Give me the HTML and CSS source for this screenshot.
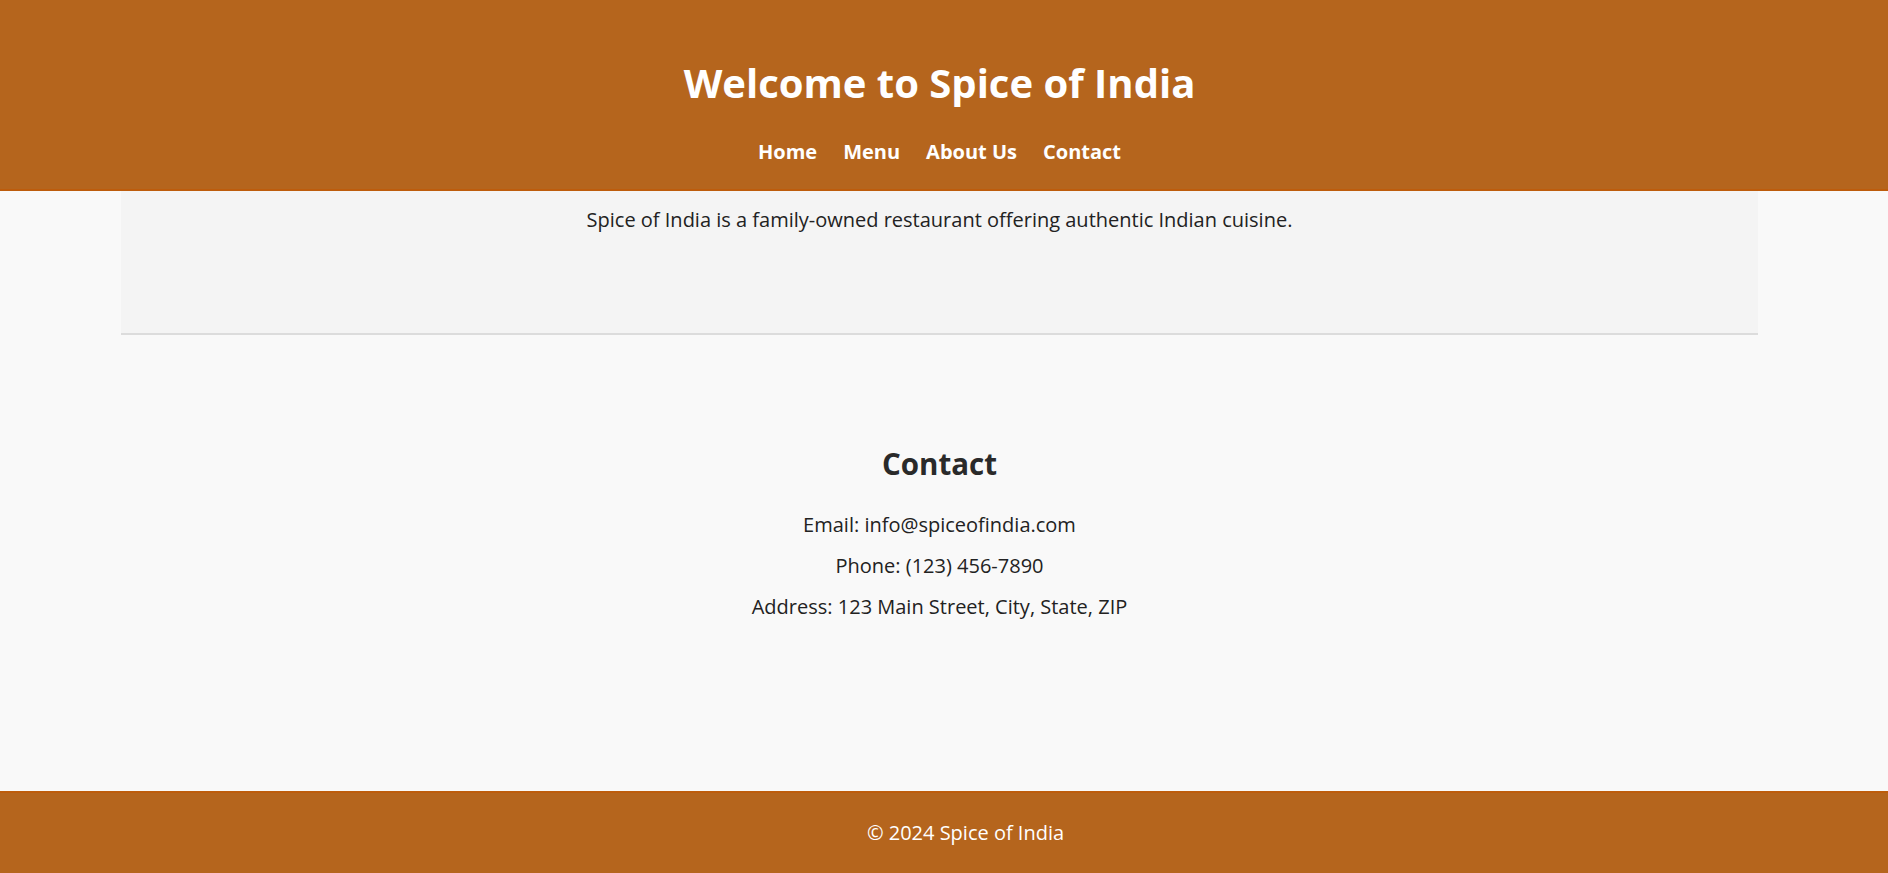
FILE: index.html
```html
<!DOCTYPE html>
<html lang="en">
<head>
<meta charset="utf-8">
<title>Spice of India</title>
<link rel="stylesheet" href="styles.css">
</head>
<body>
<header class="site-header">
  <h1 class="site-title">Welcome to Spice of India</h1>
  <nav class="site-nav">
    <a href="#home">Home</a>
    <a href="#menu">Menu</a>
    <a href="#about">About Us</a>
    <a href="#contact">Contact</a>
  </nav>
</header>
<main class="page">
  <section class="about">
    <p>Spice of India is a family-owned restaurant offering authentic Indian cuisine.</p>
  </section>
  <section class="contact" id="contact">
    <h2 class="contact-title">Contact</h2>
    <p>Email: info@spiceofindia.com</p>
    <p>Phone: (123) 456-7890</p>
    <p>Address: 123 Main Street, City, State, ZIP</p>
  </section>
</main>
<footer class="site-footer">
  <p>&copy; 2024 Spice of India</p>
</footer>
</body>
</html>
```
FILE: styles.css
```css
* { box-sizing: border-box; }
html, body { margin: 0; padding: 0; }
body {
  font-family: "Open Sans", "Noto Sans", sans-serif;
  font-size: 20px;
  color: #222;
  background: #f9f9f9;
}
.site-header {
  background: #b5651d;
  color: #fff;
  height: 191px;
  border-bottom: 2px solid #bd5c0c;
  display: flex;
  flex-direction: column;
  align-items: center;
  padding: 57px 9px 0 0;
}
.site-title {
  margin: 0;
  font-size: 40px;
  line-height: 52px;
  font-weight: 700;
}
.site-nav {
  margin-top: 30px;
  display: flex;
  gap: 26px;
}
.site-nav a {
  color: #fff;
  text-decoration: none;
  font-weight: 700;
  font-size: 20px;
  line-height: 26px;
}
.page { display: flex; flex-direction: column; }
.about {
  margin: 0 130px 0 121px;
  background: #f4f4f4;
  border-bottom: 2px solid #dcdcdc;
  height: 144px;
  text-align: center;
  padding-top: 16px;
}
.about p { margin: 0; line-height: 26px; }
.contact {
  text-align: center;
  padding: 109px 9px 0 0;
  height: 456px;
}
.contact-title {
  margin: 0 0 28px;
  font-size: 29.5px;
  line-height: 40px;
  color: #2a2a2a;
}
.contact p { margin: 0 0 15px; line-height: 26px; }
.site-footer {
  background: #b5651d;
  border-top: 2px solid #bd5c0c;
  color: #fff;
  height: 82px;
  display: flex;
  align-items: center;
  justify-content: center;
  padding-left: 43px;
}
.site-footer p { margin: 0; line-height: 26px; }
```
